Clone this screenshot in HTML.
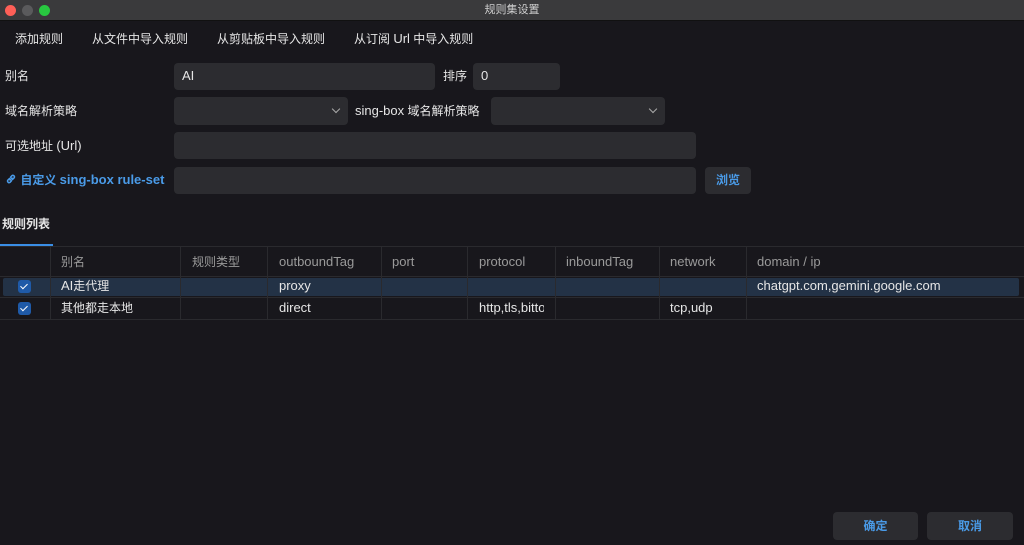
<!DOCTYPE html>
<html><head><meta charset="utf-8"><style>
*{margin:0;padding:0;box-sizing:border-box}
body{width:1024px;height:545px;background:#18171c;font-family:"Liberation Sans","Noto Sans CJK SC",sans-serif;color:#e6e6e6;font-size:12px;line-height:14px;position:relative;overflow:hidden}
.a{position:absolute;white-space:nowrap}
.l{font-size:13px}
.title{left:0;top:0;width:1024px;height:21px;background:#3a3a3c;border-bottom:1px solid #111;text-align:center;line-height:20px;color:#cfcfcf;font-size:11px}
.dot{top:5px;width:11px;height:11px;border-radius:50%}
.in{background:#2c2c30;border-radius:4px}
.chev{position:absolute;right:9px;top:9px;width:6px;height:6px;border-right:1.5px solid #aaa;border-bottom:1.5px solid #aaa;transform:rotate(45deg)}
.hd{color:#9a9a9a}
.vl{position:absolute;width:1px;background:#2a2a2e}
.cb{position:absolute;width:13px;height:13px;background:#1f5aa8;border-radius:3px;left:18px}
.cb::after{content:"";position:absolute;left:4px;top:2px;width:3px;height:6px;border-right:1.5px solid #fff;border-bottom:1.5px solid #fff;transform:rotate(45deg)}
.btn{background:#2c2c30;border-radius:4px;color:#4a9be8;text-align:center;font-weight:bold}
</style></head><body>
<div class="a title">规则集设置</div>
<div class="a dot" style="left:5px;background:#fe5f57"></div>
<div class="a dot" style="left:22px;background:#5a5a5c"></div>
<div class="a dot" style="left:39px;background:#28c840"></div>

<div class="a" style="left:15px;top:32px">添加规则</div>
<div class="a" style="left:92px;top:32px">从文件中导入规则</div>
<div class="a" style="left:217px;top:32px">从剪贴板中导入规则</div>
<div class="a" style="left:354px;top:32px">从订阅 <span class="l">Url</span> 中导入规则</div>

<div class="a" style="left:5px;top:69px">别名</div>
<div class="a in" style="left:174px;top:63px;width:261px;height:27px"><span class="l" style="position:absolute;left:8px;top:6px">AI</span></div>
<div class="a" style="left:443px;top:69px">排序</div>
<div class="a in" style="left:473px;top:63px;width:87px;height:27px"><span class="l" style="position:absolute;left:8px;top:6px">0</span></div>

<div class="a" style="left:5px;top:104px">域名解析策略</div>
<div class="a in" style="left:174px;top:97px;width:174px;height:28px"><i class="chev"></i></div>
<div class="a" style="left:355px;top:104px"><span class="l">sing-box</span> 域名解析策略</div>
<div class="a in" style="left:491px;top:97px;width:174px;height:28px"><i class="chev"></i></div>

<div class="a" style="left:5px;top:139px">可选地址 <span class="l">(Url)</span></div>
<div class="a in" style="left:174px;top:132px;width:522px;height:27px"></div>

<div class="a" style="left:5px;top:173px;color:#4a9be8;font-weight:bold">
<svg width="12" height="12" viewBox="0 0 12 12" style="vertical-align:-1px"><path d="M5 7 L7 5 M4.5 5.5 L2.8 7.2 a1.6 1.6 0 0 0 2.2 2.2 L6.5 7.7 M7.5 6.5 L9.2 4.8 a1.6 1.6 0 0 0 -2.2 -2.2 L5.5 4.3" fill="none" stroke="#4a9be8" stroke-width="1.5" stroke-linecap="round"/></svg> 自定义 <span class="l">sing-box rule-set</span></div>
<div class="a in" style="left:174px;top:167px;width:522px;height:27px"></div>
<div class="a btn" style="left:705px;top:167px;width:46px;height:27px;line-height:27px">浏览</div>

<div class="a" style="left:2px;top:217px;font-weight:bold">规则列表</div>
<div class="a" style="left:0;top:246px;width:1024px;height:1px;background:#2a2a2e"></div>
<div class="a" style="left:0;top:244px;width:53px;height:2px;background:#3a8ee6"></div>

<div class="a" style="left:3px;top:278px;width:1016px;height:18px;background:#233246;border-radius:2px"></div>
<div class="a" style="left:0;top:276px;width:1024px;height:1px;background:#2a2a2e"></div>
<div class="a" style="left:0;top:297px;width:1024px;height:1px;background:#2a2a2e"></div>
<div class="a" style="left:0;top:319px;width:1024px;height:1px;background:#2a2a2e"></div>
<div class="vl" style="left:50px;top:247px;height:72px"></div>
<div class="vl" style="left:180px;top:247px;height:72px"></div>
<div class="vl" style="left:267px;top:247px;height:72px"></div>
<div class="vl" style="left:381px;top:247px;height:72px"></div>
<div class="vl" style="left:467px;top:247px;height:72px"></div>
<div class="vl" style="left:555px;top:247px;height:72px"></div>
<div class="vl" style="left:659px;top:247px;height:72px"></div>
<div class="vl" style="left:746px;top:247px;height:72px"></div>

<div class="a hd" style="left:61px;top:255px">别名</div>
<div class="a hd" style="left:192px;top:255px">规则类型</div>
<div class="a hd l" style="left:279px;top:255px">outboundTag</div>
<div class="a hd l" style="left:392px;top:255px">port</div>
<div class="a hd l" style="left:479px;top:255px">protocol</div>
<div class="a hd l" style="left:566px;top:255px">inboundTag</div>
<div class="a hd l" style="left:670px;top:255px">network</div>
<div class="a hd l" style="left:757px;top:255px">domain / ip</div>

<div class="cb" style="top:280px"></div>
<div class="a" style="left:61px;top:279px"><span class="l">AI</span>走代理</div>
<div class="a l" style="left:279px;top:279px">proxy</div>
<div class="a l" style="left:757px;top:279px">chatgpt.com,gemini.google.com</div>

<div class="cb" style="top:302px"></div>
<div class="a" style="left:61px;top:301px">其他都走本地</div>
<div class="a l" style="left:279px;top:301px">direct</div>
<div class="a l" style="left:479px;top:301px;width:65px;overflow:hidden">http,tls,bittorrent</div>
<div class="a l" style="left:670px;top:301px">tcp,udp</div>

<div class="a btn" style="left:833px;top:512px;width:85px;height:28px;line-height:28px">确定</div>
<div class="a btn" style="left:927px;top:512px;width:86px;height:28px;line-height:28px">取消</div>
</body></html>
